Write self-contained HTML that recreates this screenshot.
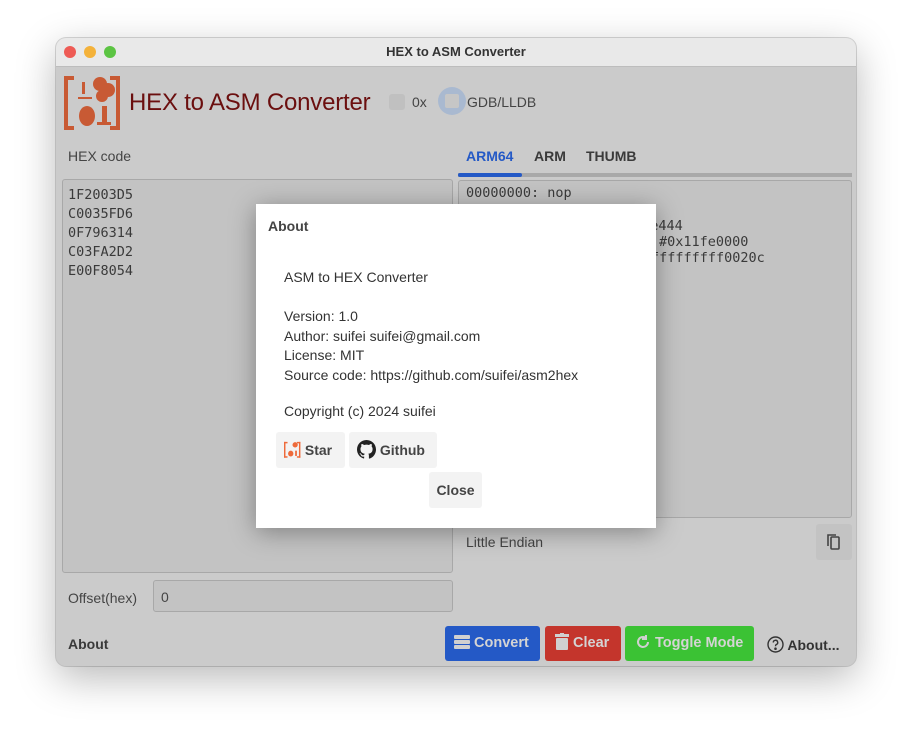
<!DOCTYPE html>
<html><head><meta charset="utf-8"><style>
*{box-sizing:border-box;margin:0;padding:0}
body{width:912px;height:740px;background:#fff;font-family:"Liberation Sans","DejaVu Sans",sans-serif;position:relative;overflow:hidden}
.win{position:absolute;left:56px;top:38px;width:800px;height:628px;border-radius:10px;background:#cbcbcb;box-shadow:0 12px 40px rgba(0,0,0,.28),0 0 0 1px rgba(0,0,0,.15);overflow:hidden}
.tb{height:29px;background:#e9e9e9;border-bottom:1px solid #bdbdbd;text-align:center;font-weight:bold;font-size:13px;line-height:28px;color:#333}
.dot{position:absolute;top:8px;width:12px;height:12px;border-radius:50%}
.a{position:absolute}
.t{color:#444;font-size:14px}
.box{position:absolute;background:#c3c3c3;border:1px solid #a8a8a8;border-radius:3px}
.mono{font-family:"DejaVu Sans Mono","Liberation Mono",monospace;font-size:13.5px;color:#3a3a3a;line-height:19px}
.btn{position:absolute;top:588px;height:35px;border-radius:3px;color:#d4d4d4;font-weight:bold;font-size:14.5px;line-height:35px;padding-left:10px}
.dlg{position:absolute;left:256px;top:204px;width:400px;height:324px;background:#fff;box-shadow:0 4px 24px rgba(0,0,0,.35)}
.dlg p{position:absolute;left:28px;font-size:14px;color:#333}
.db{position:absolute;background:#f3f3f3;border-radius:3px;height:36px;font-weight:bold;font-size:14px;color:#444;line-height:36px}
</style></head><body>
<div class="win">
<div class="tb">HEX to ASM Converter</div>
<div class="dot" style="left:8px;background:#ee5b55"></div>
<div class="dot" style="left:28px;background:#f4b23a"></div>
<div class="dot" style="left:48px;background:#5cc443"></div>
<svg class="a" style="left:8px;top:34px" width="58" height="60" viewBox="0 0 58 60">
<g fill="#c85a34"><rect x="0" y="4" width="4" height="54"/><rect x="0" y="4" width="10" height="4"/><rect x="0" y="54" width="10" height="4"/>
<rect x="52" y="4" width="4" height="54"/><rect x="46" y="4" width="10" height="4"/><rect x="46" y="54" width="10" height="4"/>
<circle cx="36" cy="12" r="7"/><circle cx="44" cy="18" r="7"/><circle cx="38" cy="24" r="6"/>
<ellipse cx="23" cy="44" rx="8" ry="10"/><rect x="38" y="34" width="5" height="18"/><rect x="33" y="50" width="14" height="3"/>
<rect x="18" y="10" width="3" height="12"/><rect x="14" y="25" width="14" height="2"/></g></svg>
<div class="a" style="left:73px;top:51px;font-size:24px;letter-spacing:-0.2px;color:#6b0f0f">HEX to ASM Converter</div>
<div class="a" style="left:333px;top:56px;width:16px;height:16px;background:#c0c0c0;border-radius:3px"></div>
<div class="a t" style="left:356px;top:56px">0x</div>
<div class="a" style="left:382px;top:49px;width:28px;height:28px;border-radius:50%;background:#a9b9d0"></div>
<div class="a" style="left:389px;top:56px;width:14px;height:14px;background:#c6c6c6;border-radius:2px"></div>
<div class="a t" style="left:411px;top:56px">GDB/LLDB</div>
<div class="a t" style="left:12px;top:110px">HEX code</div>
<div class="a" style="left:410px;top:110px;font-weight:bold;font-size:14px;color:#2459c6">ARM64</div>
<div class="a" style="left:478px;top:110px;font-weight:bold;font-size:14px;color:#3a3a3a">ARM</div>
<div class="a" style="left:530px;top:110px;font-weight:bold;font-size:14px;color:#3a3a3a">THUMB</div>
<div class="a" style="left:402px;top:135px;width:394px;height:4px;background:#a9a9a9"></div>
<div class="a" style="left:402px;top:135px;width:64px;height:4px;background:#2459c6;border-radius:2px"></div>
<div class="box mono" style="left:6px;top:141px;width:391px;height:394px;padding:6px 5px">1F2003D5<br>C0035FD6<br>0F796314<br>C03FA2D2<br>E00F8054</div>
<div class="box mono" style="left:402px;top:142px;width:394px;height:338px"></div>
<div class="a mono" style="left:410px;top:146px">00000000: nop</div>
<div class="a mono" style="left:578px;top:180px;line-height:16px">3de444<br><span style="margin-left:25px">#0x11fe0000</span><br><span style="margin-left:17px">fffffffff0020c</span></div>
<div class="a t" style="left:410px;top:496px">Little Endian</div>
<div class="a" style="left:760px;top:486px;width:36px;height:36px;background:#c3c3c3;border-radius:3px"></div>
<svg class="a" style="left:768px;top:494px" width="20" height="20" viewBox="0 0 20 20" fill="none" stroke="#444" stroke-width="1.6"><rect x="7" y="5" width="8" height="12" rx="1"/><path d="M4 14V3h8"/></svg>
<div class="a t" style="left:12px;top:552px">Offset(hex)</div>
<div class="box t" style="left:97px;top:542px;width:300px;height:32px;padding:8px 7px">0</div>
<div class="a" style="left:12px;top:598px;font-weight:bold;font-size:14px;color:#3a3a3a">About</div>
<div class="btn" style="left:389px;width:95px;background:#2459c6;padding-left:9px">
<svg style="vertical-align:-3px" width="16" height="16" viewBox="0 0 16 16" fill="#d0d0d0"><rect x="0" y="1" width="16" height="4" rx="1"/><rect x="0" y="6" width="16" height="4" rx="1"/><rect x="0" y="11" width="16" height="4" rx="1"/></svg> Convert</div>
<div class="btn" style="left:489px;width:76px;background:#c4352c">
<svg style="vertical-align:-3px" width="14" height="17" viewBox="0 0 14 17" fill="#d0d0d0"><rect x="0" y="1" width="14" height="3"/><rect x="5" y="0" width="4" height="2"/><rect x="1" y="5" width="12" height="12" rx="1"/></svg> Clear</div>
<div class="btn" style="left:569px;width:129px;background:#3bc234">
<svg style="vertical-align:-3px" width="16" height="16" viewBox="0 0 16 16" fill="none" stroke="#d0d0d0" stroke-width="2"><path d="M13 8a5 5 0 1 1-2-4"/><path d="M11 1v4h-4" /></svg> Toggle Mode</div>
<div class="a" style="left:711px;top:598px;font-weight:bold;font-size:14px;color:#333">
<svg style="vertical-align:-3px" width="17" height="17" viewBox="0 0 17 17" fill="none" stroke="#333" stroke-width="1.4"><circle cx="8.5" cy="8.5" r="7.5"/><path d="M6.3 6.5a2.2 2.2 0 1 1 3 2c-.8.4-.8 1-.8 1.8"/><circle cx="8.5" cy="12.7" r=".6" fill="#333"/></svg> About...</div>
</div>
<div class="dlg">
<p style="left:12px;top:14px;font-weight:bold;color:#444">About</p>
<p style="top:65px">ASM to HEX Converter</p>
<p style="top:103px;line-height:19.5px">Version: 1.0<br>Author: suifei suifei@gmail.com<br>License: MIT<br>Source code: https://github.com/suifei/asm2hex</p>
<p style="top:199px">Copyright (c) 2024 suifei</p>
<div class="db" style="left:20px;top:228px;width:69px;padding-left:8px">
<svg style="vertical-align:-4px" width="17" height="19" viewBox="0 0 58 60"><g fill="#ee6a3a"><rect x="0" y="4" width="5" height="54"/><rect x="0" y="4" width="12" height="5"/><rect x="0" y="53" width="12" height="5"/><rect x="51" y="4" width="5" height="54"/><rect x="44" y="4" width="12" height="5"/><rect x="44" y="53" width="12" height="5"/><circle cx="38" cy="14" r="9"/><ellipse cx="23" cy="44" rx="9" ry="10"/><rect x="38" y="34" width="6" height="18"/></g></svg> Star</div>
<div class="db" style="left:93px;top:228px;width:88px;padding-left:8px">
<svg style="vertical-align:-4px" width="19" height="19" viewBox="0 0 16 16"><path fill="#222" d="M8 0C3.58 0 0 3.58 0 8c0 3.54 2.290 6.530 5.470 7.590.4.07.55-.17.55-.38v-1.33c-2.23.48-2.7-1.07-2.7-1.07-.36-.92-.89-1.170-.89-1.170-.73-.5.06-.49.06-.49.8.06 1.23.83 1.23.83.72 1.22 1.87.87 2.33.67.07-.52.28-.87.51-1.07-1.78-.2-3.64-.89-3.64-3.95 0-.87.31-1.59.83-2.15-.08-.2-.36-1.02.08-2.12 0 0 .67-.21 2.2.82a7.6 7.6 0 0 1 4 0c1.53-1.04 2.2-.82 2.2-.82.44 1.1.16 1.92.08 2.12.51.56.82 1.27.82 2.15 0 3.07-1.87 3.75-3.65 3.95.29.25.54.73.54 1.48v2.2c0 .21.15.46.55.38A8.01 8.01 0 0 0 16 8c0-4.42-3.58-8-8-8z"/></svg> Github</div>
<div class="db" style="left:173px;top:268px;width:53px;text-align:center">Close</div>
</div>
</body></html>
